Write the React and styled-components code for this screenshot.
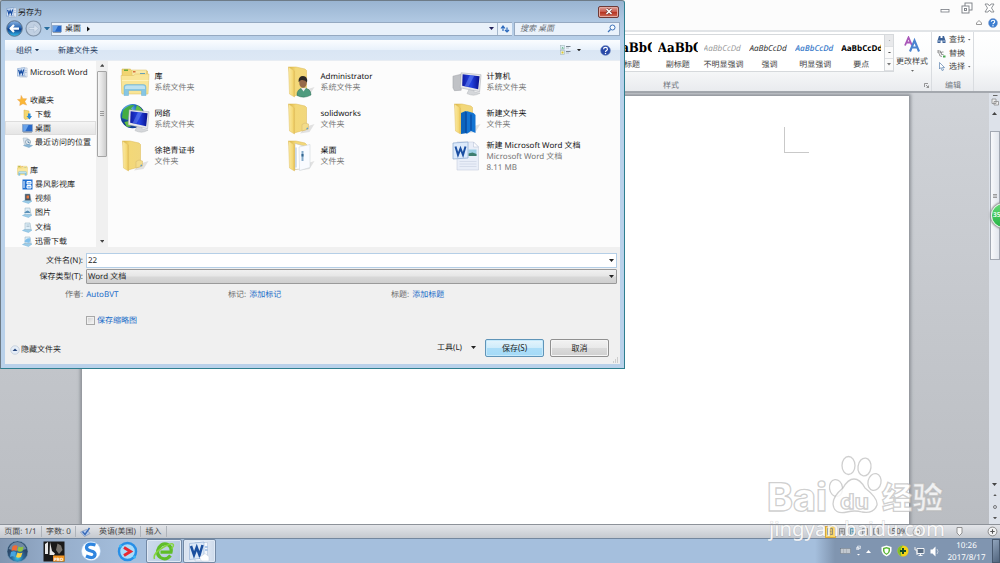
import React, { useState } from 'react';
import styled, { createGlobalStyle, css } from 'styled-components';

const GlobalStyle = createGlobalStyle`
  * {
    box-sizing: border-box;
  }

  body {
    margin: 0;
    overflow: hidden;
    font-family: 'Noto Sans', 'Noto Sans CJK SC', sans-serif;
    font-size: 8px;
    line-height: 11px;
    color: #1e1e1e;
    text-rendering: geometricPrecision;
  }
`;

const Desktop = styled.div`
  position: relative;
  display: flex;
  flex-direction: column;
  width: 1000px;
  height: 563px;
  overflow: hidden;
  white-space: nowrap;
`;

/* ---------- Word window ---------- */

const TitleBar = styled.header`
  display: flex;
  flex-direction: column;
  align-items: flex-end;
  height: 32px;
  background: #fcfcfc;
  border-bottom: 2px solid #e1e4e7;
`;

const WindowButtons = styled.div`
  display: flex;
  align-items: center;
  gap: 11px;
  height: 15px;
  padding-right: 5px;
`;

const HelpButtons = styled.div`
  display: flex;
  align-items: center;
  gap: 6px;
  height: 15px;
  padding-right: 2px;
`;

const Ribbon = styled.div`
  display: flex;
  justify-content: flex-end;
  height: 61px;
  padding-right: 26px;
  background: linear-gradient(#ffffff, #fafbfc 55%, #e9ebee);
  border-bottom: 2px solid #a4a8ae;
`;

const RibbonGroup = styled.div`
  display: flex;
  flex-direction: column;
  width: ${({ $width }) => $width}px;
  border-right: 1px solid #d9dce0;
`;

const GroupBody = styled.div`
  display: flex;
  flex: 1;
  align-items: flex-start;
  padding: ${({ $padding }) => $padding || '2px 0 0'};
`;

const GroupLabel = styled.div`
  position: relative;
  height: 10px;
  line-height: 10px;
  padding-left: ${({ $left }) => $left}px;
  color: #70767e;
`;

const Launcher = styled.svg`
  position: absolute;
  right: 2px;
  top: 2px;
`;

const Gallery = styled.div`
  display: flex;
  width: 286px;
  height: 38px;
  background: #ffffff;
  border: 1px solid #d6d9dc;
`;

const StyleCard = styled.div`
  display: flex;
  flex-direction: column;
  align-items: center;
  width: 46px;
  padding-top: 6px;
  color: #444;
`;

const Sample = styled.div`
  width: 40px;
  height: 15px;
  line-height: 15px;
  margin-bottom: 3px;
  overflow: hidden;
  font-family: 'Open Sans', sans-serif;
  font-size: 8.1px;
  color: ${({ $color }) => $color || '#222'};
  font-style: ${({ $italic }) => ($italic ? 'italic' : 'normal')};
  font-weight: ${({ $bold }) => $bold || 400};

  ${({ $heading }) => $heading && css`
    font-family: 'DejaVu Serif Condensed', 'DejaVu Serif', serif;
    font-stretch: condensed;
    font-size: 13.2px;
    font-weight: 700;
    color: #000;
  `}
`;

const GalleryArrows = styled.div`
  display: flex;
  flex-direction: column;
  width: 9px;
  border-left: 1px solid #d6d9dc;
`;

const GalleryArrow = styled.div`
  display: flex;
  flex: 1;
  align-items: center;
  justify-content: center;
  background: ${({ $muted }) => ($muted ? '#e8e9eb' : '#fbfbfb')};
  border-bottom: 1px solid #dfe1e4;
`;

const ChangeStyles = styled.div`
  display: flex;
  flex-direction: column;
  align-items: center;
  width: 37px;
  padding: 2px 1px 0 0;
  gap: 3px;
  color: #444;
`;

const EditMenu = styled.div`
  display: flex;
  flex-direction: column;
  padding-left: 5px;
`;

const EditItem = styled.div`
  display: flex;
  align-items: center;
  gap: 3px;
  height: 13.6px;
  color: #444;
`;

const Workspace = styled.main`
  display: flex;
  flex: 1;
  padding-left: 82px;
  background: linear-gradient(#d0d3d8, #babdc2);
`;

const Page = styled.div`
  width: 827px;
  margin-top: 3px;
  padding: 31px 0 0 702px;
  background: #ffffff;
  box-shadow: 0 0 3px 2px #8f9399;
`;

const CropMark = styled.div`
  width: 25px;
  height: 26px;
  border-left: 1px solid #c9c9c9;
  border-bottom: 1px solid #c9c9c9;
`;

const DocScroll = styled.div`
  display: flex;
  flex-direction: column;
  align-items: center;
  width: 11px;
  margin-left: auto;
  background: #dde2ea;
`;

const DocScrollTop = styled.div`
  display: flex;
  flex-direction: column;
  align-items: center;
  justify-content: space-between;
  height: 38px;
  padding: 2px 0 16px;
`;

const DocThumb = styled.div`
  display: flex;
  align-items: center;
  justify-content: center;
  width: 10px;
  height: 129px;
  border: 1px solid #a3a9b3;
  background: linear-gradient(90deg, #f8f9fb, #e2e6ed);
`;

const DocScrollBottom = styled.div`
  display: flex;
  flex-direction: column;
  align-items: center;
  justify-content: space-between;
  height: 41px;
  margin-top: auto;
  padding-bottom: 5px;
`;

const SpeedBall = styled.div`
  position: absolute;
  left: 991px;
  top: 203px;
  width: 25px;
  height: 25px;
  padding-left: 1px;
  border-radius: 50%;
  border: 1px solid #e5f2e7;
  background: linear-gradient(#62d875, #27b545);
  box-shadow: 0 0 2px 1px #888;
  color: #fff;
  font-size: 6.5px;
  font-weight: 600;
  line-height: 22px;
`;

const StatusBar = styled.footer`
  display: flex;
  align-items: center;
  height: 14px;
  background: linear-gradient(#e3e5e9, #c5c9cf);
  border-top: 1px solid #8d9299;
  color: #444;
`;

const StatusItem = styled.div`
  display: flex;
  align-items: center;
  justify-content: center;
  width: ${({ $width }) => $width}px;
  height: 11px;
  border-right: ${({ $plain }) => ($plain ? 'none' : '1px solid #aeb3ba')};
`;

const ViewControls = styled.div`
  display: flex;
  align-items: center;
  margin-left: auto;
`;

const ViewButton = styled.div`
  display: flex;
  justify-content: center;
  align-items: center;
  width: 11.5px;
  height: 12px;
  background: ${({ $active }) => ($active ? '#f9d766' : 'transparent')};
  border: 1px solid ${({ $active }) => ($active ? '#d9a93c' : 'transparent')};
`;

const ZoomLevel = styled.span`
  width: 22px;
  margin: 0 3px 0 5px;
`;

const ZoomSlider = styled.div`
  display: flex;
  align-items: center;
  width: 88px;
  padding-right: 2px;
`;

const ZoomThumb = styled.svg`
  margin: 0 auto 0 34px;
`;

/* ---------- Taskbar ---------- */

const Taskbar = styled.div`
  display: flex;
  height: 25px;
  border-top: 1px solid #73879f;
  background: linear-gradient(90deg, #8196b1 0, #93aac7 45px, #a5bfdd 130px, #a5bfdd 815px, #8095b0 835px, #8095b0);
`;

const TaskButton = styled.div`
  display: flex;
  align-items: center;
  justify-content: center;
  width: ${({ $width }) => $width}px;
  height: 24px;

  ${({ $open }) => $open && css`
    margin-right: 1px;
    border: 1px solid #7389a5;
    border-radius: 2px;
    background: ${$open === 'active' ? 'linear-gradient(90deg, #d5e0ef, #eff4fb 50%, #ccd9ea)' : 'linear-gradient(120deg, #cfdcec, #b0c6df)'};
    box-shadow: inset 0 0 0 1px #dfe9f5;
  `}
`;

const Tray = styled.div`
  display: flex;
  align-items: center;
  margin-left: auto;
  gap: 5px;
`;

const Clock = styled.div`
  width: 45px;
  text-align: center;
  color: #fff;
  font-size: 8px;
  line-height: 11.3px;
  padding-top: 1px;
`;

const ShowDesktop = styled.div`
  width: 8px;
  height: 24px;
  margin-left: -2px;
  border: 1px solid #48596f;
  background: linear-gradient(135deg, #8fa3bb, #52657e);
`;

/* ---------- Save dialog ---------- */

const Dialog = styled.section`
  position: absolute;
  left: 0;
  top: 0;
  display: flex;
  flex-direction: column;
  width: 625px;
  height: 369px;
  padding: 0 4px 4px 4px;
  background: linear-gradient(#99b4d1 0, #b0c8e2 20px, #b9d1ea 40px, #b9d1ea);
  border: 1px solid #6d7b87;
  border-right-color: #2e7f8f;
  border-bottom-color: #2e7f8f;
  border-radius: 2px 3px 0 0;
`;

const DialogTitle = styled.div`
  display: flex;
  align-items: center;
  height: 19px;
  padding: 3px 1px 0 1px;
  gap: 1px;
`;

const CloseButton = styled.button`
  display: flex;
  align-items: center;
  justify-content: center;
  width: 21px;
  height: 12px;
  margin-left: auto;
  margin-top: -1px;
  padding: 0;
  border: 1px solid #6d3a37;
  border-radius: 2px;
  background: linear-gradient(#dca29a, #c9584b 48%, #b5321f 52%, #cf6e5b);
  box-shadow: inset 0 0 0 1px #e3aaa2;
`;

const AddressRow = styled.div`
  display: flex;
  align-items: center;
  height: 17px;
`;

const NavButtons = styled.div`
  display: flex;
  align-items: center;
  gap: 2px;
  width: 46px;
  padding-left: 1px;
`;

const AddressBar = styled.div`
  display: flex;
  align-items: center;
  width: 461px;
  height: 14px;
  padding: 0;
  border: 1px solid #95a9c1;
  border-right: none;
  background: #e9f1fa;
`;

const CrumbText = styled.span`
  margin: 0 6px 0 3px;
`;

const AddressEnd = styled.div`
  display: flex;
  align-items: center;
  justify-content: center;
  width: ${({ $width }) => $width}px;
  height: 12px;
  border-left: ${({ $line }) => ($line ? '1px solid #a5b7cc' : 'none')};
  margin-left: ${({ $push }) => ($push ? 'auto' : 0)};
`;

const SearchBox = styled.div`
  display: flex;
  align-items: center;
  justify-content: space-between;
  width: 106px;
  height: 14px;
  margin-left: 2px;
  padding: 0 3px 0 5px;
  border: 1px solid #95a9c1;
  background: #eaf2fb;
  color: #6b7077;
  font-style: italic;
`;

const CommandBar = styled.div`
  display: flex;
  align-items: center;
  height: 21px;
  margin-top: 3px;
  padding: 0 9px 0 11px;
  background: linear-gradient(#fbfdff, #e8f1fb 50%, #dae6f4 52%, #dde8f5);
  border-bottom: 1px solid #e8edf3;
  color: #1e395b;
`;

const Command = styled.div`
  display: flex;
  align-items: center;
  gap: 3px;
  margin-right: 19px;
`;

const CommandIcons = styled.div`
  display: flex;
  align-items: center;
  margin-left: auto;
  gap: ${({ $gap }) => $gap}px;
`;

const Explorer = styled.div`
  display: flex;
  height: 186px;
  background: #fcfcfc;
`;

const Tree = styled.nav`
  width: 91px;
  padding-top: 4px;
  overflow: hidden;
`;

const TreeRow = styled.div`
  display: flex;
  align-items: center;
  gap: 2px;
  height: 14.1px;
  margin-top: ${({ $gap }) => ($gap ? 14.1 : 0)}px;
  padding-left: ${({ $level }) => ($level ? 17 : 12)}px;
  background: ${({ $selected }) => ($selected ? 'linear-gradient(#f6f6f6, #e4e4e4)' : 'none')};
  box-shadow: ${({ $selected }) => ($selected ? 'inset 0 0 0 1px #dddddd' : 'none')};
`;

const TreeScroll = styled.div`
  display: flex;
  flex-direction: column;
  align-items: center;
  width: 12px;
  padding: 3px 0 4px;
  background: #f0f0f0;
`;

const TreeThumb = styled.div`
  display: flex;
  align-items: center;
  justify-content: center;
  width: 10px;
  height: 86px;
  margin: 4px 0 auto;
  border: 1px solid #a5a5a5;
  border-radius: 1px;
  background: linear-gradient(90deg, #f5f5f5, #e3e3e3 50%, #cdcdcd);
`;

const FileGrid = styled.div`
  display: grid;
  grid-template-columns: 166px 166px 166px;
  grid-auto-rows: 37px;
  padding: 2px 0 0 12px;
`;

const FileItem = styled.div`
  display: flex;
  align-items: center;
  gap: 4.5px;
`;

const FileText = styled.div`
  padding-top: ${({ $tall }) => ($tall ? 2 : 0)}px;
`;

const FileMeta = styled.div`
  color: #747474;
`;

const FileName = styled.div`
  color: #111;
`;

const SaveForm = styled.div`
  display: flex;
  flex-direction: column;
  flex: 1;
  padding: 5px 2px 0 0;
  background: #f0f0f0;
`;

const FieldRow = styled.label`
  display: flex;
  align-items: center;
  height: 16.5px;
`;

const FieldLabel = styled.span`
  width: 78px;
  margin-right: 3px;
  text-align: right;
`;

const Field = styled.div`
  display: flex;
  align-items: center;
  justify-content: space-between;
  flex: 1;
  height: 15px;
  margin-right: 1px;
  padding: 0 2px 0 1px;
  border: 1px solid #b5cfe7;
  background: #fff;

  ${({ $select }) => $select && css`
    border-color: #9a9a9a;
    border-radius: 1px;
    background: linear-gradient(#f0f0f0, #e6e6e6 48%, #d8d8d8 52%, #cfcfcf);
  `}
`;

const DetailsRow = styled.div`
  display: flex;
  align-items: center;
  height: 19px;
`;

const Detail = styled.div`
  display: flex;
  gap: 3px;
  width: ${({ $width }) => $width}px;
  padding-left: ${({ $indent }) => $indent || 0}px;
  color: #6d6d6d;
`;

const Link = styled.span`
  color: #1b6cc8;
`;

const CheckRow = styled.div`
  display: flex;
  align-items: center;
  gap: 2px;
  height: 12px;
  margin: 10px 0 0 81px;
`;

const CheckBox = styled.button`
  width: 9px;
  height: 9px;
  padding: 0;
  border: 1px solid #a8a8a8;
  background: ${({ $on }) => ($on ? '#9cc3ea' : 'linear-gradient(135deg, #cdcdcd, #fafafa)')};
  box-shadow: inset 0 0 0 1px #f0f0f0;
`;

const DialogFooter = styled.div`
  display: flex;
  align-items: center;
  height: 19px;
  margin-top: 12px;
  padding: 0 9px 0 5px;
`;

const HideFolders = styled.div`
  display: flex;
  align-items: center;
  gap: 1px;
  margin-top: 4px;
`;

const Tools = styled.div`
  display: flex;
  align-items: center;
  gap: 9px;
  margin-left: auto;
  margin-right: 9px;
`;

const PushButton = styled.button`
  width: 59px;
  height: 18px;
  margin-left: ${({ $primary }) => ($primary ? 0 : 6)}px;
  padding: 0;
  font: inherit;
  color: #1e1e1e;
  border: 1px solid ${({ $primary }) => ($primary ? '#5f94b8' : '#909090')};
  border-radius: 2px;
  background: ${({ $primary }) =>
    $primary
      ? 'linear-gradient(#e4f4fc, #cfecfb 48%, #abddf8 52%, #a4daf7)'
      : 'linear-gradient(#f2f2f2, #e9e9e9 48%, #dadada 52%, #d0d0d0)'};
  box-shadow: inset 0 0 0 1px ${({ $primary }) => ($primary ? '#c5e9fb' : '#f5f5f5')};
`;

const SizeGrip = styled.svg`
  position: absolute;
  right: 5px;
  bottom: 4px;
`;

const Watermark = styled.svg`
  position: absolute;
  left: 760px;
  top: 450px;
`;

/* ---------- Icons ---------- */

const IconBase = styled.svg`
  display: block;
  flex: none;
`;

const Caret = ({ size = 5, up, color = '#222' }) => (
  <IconBase width={size} height={size * 0.6} viewBox="0 0 10 6">
    <path d={up ? 'M0 6L5 0L10 6Z' : 'M0 0H10L5 6Z'} fill={color} />
  </IconBase>
);

const WordIcon = ({ size = 11 }) => (
  <IconBase width={size} height={size} viewBox="0 0 24 24">
    <path d="M9 2h13v20H6V9" fill="#eef3fa" stroke="#9aabc4" />
    <path d="M18 8h3M18 12h3M10 20h10" stroke="#7d98bf" strokeWidth="1.400" />
    <path d="M1 3.500L17 1.500V18L1 20Z" fill="#dce9f8" stroke="#5d86bf" />
    <path d="M3.500 6L6.200 15L9 7.500L12 15L14.500 5.500" fill="none" stroke="#1a4fa3" strokeWidth="2.800" />
  </IconBase>
);

const WordTaskIcon = () => (
  <svg width="21" height="21" viewBox="0 0 42 42">
    <path d="M12 3h25v32l-9 5H12Z" fill="#f4f7fc" stroke="#a9bbd5" />
    <path d="M32 12h5M32 18h5" stroke="#6a9bd8" strokeWidth="2" />
    <path d="M1 5L30 2V34L1 37Z" fill="#dce8f7" stroke="#7fa1cf" />
    <path d="M4 10L10 28L15.500 13L21 28L27 8" fill="none" stroke="#1b4f9f" strokeWidth="5" />
    <path d="M21 33l11-8l8 6v9H25Z" fill="#fff" stroke="#bfcbdc" />
  </svg>
);

const MonitorIcon = ({ width = 10 }) => (
  <IconBase width={width} height={width * 0.8} viewBox="0 0 20 16">
    <rect x="1" y="1" width="18" height="13" fill="#2869c9" stroke="#8fa5c0" />
    <path d="M2 2h10L6 13H2Z" fill="#6aa3e8" />
    <path d="M2 15h16" stroke="#7c8794" strokeWidth="1.500" />
  </IconBase>
);

const BackIcon = () => (
  <IconBase width="17" height="17" viewBox="0 0 34 34">
    <defs>
      <linearGradient id="back" x2="0" y2="1">
        <stop stopColor="#8eb5e2" /><stop offset=".45" stopColor="#2866b3" />
        <stop offset=".55" stopColor="#0c3d8a" /><stop offset="1" stopColor="#35c2f2" />
      </linearGradient>
    </defs>
    <circle cx="17" cy="17" r="15.500" fill="url(#back)" stroke="#5b7189" strokeWidth="2" />
    <path d="M26 17H10M16 10L9 17L16 24" fill="none" stroke="#fff" strokeWidth="4.500" strokeLinejoin="round" />
  </IconBase>
);

const ForwardIcon = () => (
  <IconBase width="17" height="17" viewBox="0 0 34 34">
    <circle cx="17" cy="17" r="15" fill="#c1d0e2" stroke="#7f91a6" strokeWidth="2.200" />
    <path d="M8 15h10V9l9 8l-9 8v-6H8Z" fill="#d7e2ef" stroke="#9fb2c9" />
  </IconBase>
);

const RefreshIcon = () => (
  <svg width="10" height="8" viewBox="0 0 20 16">
    <path d="M6 12V3M2 7L6 2L10 7" fill="none" stroke="#2d6bbd" strokeWidth="2.400" />
    <path d="M14 5v9M10 10l4 4l4-4" fill="none" stroke="#2d6bbd" strokeWidth="2.400" />
  </svg>
);

const SearchIcon = () => (
  <svg width="9" height="9" viewBox="0 0 18 18">
    <circle cx="11" cy="7" r="5" fill="#f5faff" stroke="#3c72b8" strokeWidth="2" />
    <path d="M7 11L2 16" stroke="#3c72b8" strokeWidth="2.600" />
  </svg>
);

const HelpIcon = ({ size = 10, color = '#2949a8' }) => (
  <svg width={size} height={size} viewBox="0 0 20 20">
    <circle cx="10" cy="10" r="9" fill={color} stroke="#8aa0cc" />
    <path d="M6.500 7.500C6.500 3.500 13.500 3.500 13.500 7.500C13.500 10 10 10 10 12.500" fill="none" stroke="#fff" strokeWidth="2.200" />
    <circle cx="10" cy="15.500" r="1.400" fill="#fff" />
  </svg>
);

const ViewIcon = () => (
  <svg width="11" height="10" viewBox="0 0 22 20">
    <rect x="1" y="1" width="8" height="8" fill="#d9ecf2" stroke="#9cb0b5" />
    <rect x="1" y="11" width="8" height="8" fill="#e2edd8" stroke="#9cb0b5" />
    <path d="M3 7l2-3l3 3Z" fill="#4fa968" />
    <circle cx="5" cy="15" r="2" fill="#e3c52c" />
    <path d="M12 3h9M12 13h9" stroke="#77828e" strokeWidth="2" />
    <path d="M12 6h6M12 16h6" stroke="#acb5be" strokeWidth="1.500" />
  </svg>
);

const LibraryIcon = ({ size = 30 }) => (
  <IconBase width={size} height={size} viewBox="0 0 60 60">
    <path d="M4 4h17l3 4h31v44H4Z" fill="#f1d470" stroke="#d3b04e" />
    <path d="M24 6h29v12H24Z" fill="#f8e9a7" stroke="#dcc06b" />
    <path d="M8 5h8v3H8Z" fill="#69a83b" />
    <path d="M26 8h5v3H26Z" fill="#d8703c" />
    <path d="M40 12h10v3H40Z" fill="#4197d0" />
    <path d="M2 17H27L31 14H58L56 54H4Z" fill="#f9e597" stroke="#dfbf60" />
    <path d="M4 27H57" stroke="#fff2b9" strokeWidth="2" />
    <path d="M8 57V40Q8 35 13 35H47Q52 35 52 40V57H43V47H17V57Z" fill="#86c6e4" stroke="#6fb0d0" />
    <path d="M10 44V40Q10 37 14 37H46Q50 37 50 40V44Z" fill="#bde1f0" />
  </IconBase>
);

const FolderIcon = ({ content }) => (
  <IconBase width="30" height="34" viewBox="0 0 60 68">
    <defs>
      <linearGradient id="folderBack"><stop stopColor="#d9b23f" /><stop offset=".4" stopColor="#f3d878" /><stop offset="1" stopColor="#f1d77d" /></linearGradient>
      <linearGradient id="folderFlap"><stop stopColor="#fbeaa4" /><stop offset=".7" stopColor="#f4d876" /><stop offset="1" stopColor="#e3bc50" /></linearGradient>
    </defs>
    <path d="M38 50L57 44L47 60L28 63Z" fill="#777" opacity=".2" />
    <path d="M5 4H20L38 8L41 11V55L16 62Z" fill="url(#folderBack)" stroke="#dcb852" />
    {content === 'blue' && (
      <>
        <path d="M18 22L27 18L31 20V62L18 64Z" fill="#0c64bd" />
        <path d="M29 18L43 22L47 26V62L38 58L29 64Z" fill="#1273d2" />
        <path d="M28 20V62M38 25V57" stroke="#063f93" strokeWidth="2" />
      </>
    )}
    {content === 'docs' && (
      <>
        <path d="M18 9L39 15V59L18 61Z" fill="#fff" stroke="#bbb" />
        <path d="M26 16L48 11V57L27 63Z" fill="#f9fbff" stroke="#c9d0d7" />
        <path d="M20 17V57" stroke="#a9c2dc" strokeWidth="2" />
        <path d="M33 24v20" stroke="#84aacb" strokeWidth="4" />
        <path d="M33 30v5" stroke="#33658f" strokeWidth="4" />
      </>
    )}
    {!content && <path d="M38 42l7 2v10l-13 4V45Z" fill="#f3dc8a" stroke="#d2b76c" />}
    {!content && <path d="M41 52l3-1v3l-3 1Z" fill="#5b9bd0" />}
    <path d="M5 4L17 12V64L7 58Z" fill="url(#folderFlap)" stroke="#e1c166" />
    {content === 'user' && (
      <>
        <path d="M22 61Q21 48 34 46Q50 46 50 60Q36 68 22 61Z" fill="#4f9b7e" stroke="#2b6d55" />
        <path d="M30 46l5 7l5-7Z" fill="#eee" />
        <ellipse cx="34" cy="35" rx="7.500" ry="10.500" fill="#96694a" />
        <path d="M25 33Q25 22 34 22Q44 22 42 35Q39 29 31 30Q28 30 26 34Z" fill="#2b2826" />
      </>
    )}
  </IconBase>
);

const ComputerIcon = ({ globe }) => (
  <IconBase width="30" height="31" viewBox="0 0 62 62">
    <defs>
      <linearGradient id="screen"><stop stopColor="#101ca4" /><stop offset=".5" stopColor="#2445e5" /><stop offset="1" stopColor="#08108c" /></linearGradient>
      <radialGradient id="earth" cx=".35" cy=".25"><stop stopColor="#9ed5fc" /><stop offset=".6" stopColor="#2374c4" /><stop offset="1" stopColor="#123f91" /></radialGradient>
    </defs>
    {globe ? (
      <>
        <circle cx="26" cy="26" r="25" fill="url(#earth)" />
        <path d="M6 15Q16 2 30 3L23 10L28 18L19 24L16 34L4 30Z" fill="#44ad42" />
        <path d="M35 3q9 5 13 14l-8 4l-8-8ZM9 38l10-2l3 12l-8 0Z" fill="#63bf43" />
      </>
    ) : (
      <path d="M2 20L19 16V49L5 50L2 44Z" fill="#c0c2c6" stroke="#9a9da2" />
    )}
    <path d="M36 46l8-2l2 9l12 2q-12 8-27 1Z" fill="#d5d7da" stroke="#b2b5b9" />
    <path d="M19 13L60 17L57 52L17 44Z" fill="#e7e8ea" stroke="#a0a5ad" />
    <path d="M22 16L57 20L54 47L21 40Z" fill="url(#screen)" />
    <path d="M37 18L46 19L34 42L26 41Z" fill="#6d8bf4" opacity=".5" />
  </IconBase>
);

const WordFileIcon = () => (
  <IconBase width="30" height="32" viewBox="0 0 60 64">
    <path d="M10 4H43L53 14V60H10Z" fill="#e9eef8" stroke="#bcc6d8" />
    <path d="M43 4V14H53Z" fill="#fbfcfe" stroke="#b2bdd2" />
    <path d="M33 19H49V32H33Z" fill="#9fd0e6" />
    <path d="M33 27l8-2l8 3v4H33Z" fill="#3d7d6f" />
    <path d="M15 43H49M15 48H49M15 53H49" stroke="#cdd6e6" strokeWidth="1.500" />
    <path d="M2 6L32 4V36L2 38Z" fill="#dceafb" stroke="#8fabd0" strokeWidth="1.500" />
    <path d="M7 13L12 30L17 17L22 30L27 13" fill="none" stroke="#1a4ea2" strokeWidth="4" />
  </IconBase>
);

const StarIcon = () => (
  <IconBase width="11" height="11" viewBox="0 0 24 24">
    <path d="M9 1L13 8L21 8L17 14L21 22L13 19L6 23L7 15L1 10L8 9Z" fill="#fbb735" stroke="#e9a04a" />
  </IconBase>
);

const SmallIcon = ({ kind }) => (
  <IconBase width="11" height="11" viewBox="0 0 22 22">
    {kind === 'download' && (
      <>
        <path d="M4 2l10 2v15l-8 2l-2-3Z" fill="#f4d871" stroke="#d8b14b" />
        <path d="M12 9h5v5h3l-5 7l-6-7h3Z" fill="#2b8ad6" />
      </>
    )}
    {kind === 'recent' && (
      <>
        <path d="M2 2h9l4 5v9H5Z" fill="#d9e4ee" stroke="#a5b4c1" />
        <circle cx="12" cy="10" r="5" fill="#e9f1f7" stroke="#7f97a9" strokeWidth="1.500" />
        <path d="M12 7v4h3" fill="none" stroke="#40729a" strokeWidth="1.500" />
        <path d="M3 17l9-2l9 2l-7 4Z" fill="#8cb9d8" stroke="#6c9fc3" />
      </>
    )}
    {kind === 'storm' && (
      <>
        <rect x="1" y="1" width="20" height="20" fill="#1f6fd1" />
        <path d="M4 4v14M10 5h8v5h-8ZM10 13h8v5h-8Z" stroke="#fff" strokeWidth="2" fill="#7fb7f5" />
      </>
    )}
    {['video', 'picture', 'document', 'thunder'].includes(kind) && (
      <>
        <path d="M1 17l8-4l11 3l-7 5Z" fill="#9bcce8" stroke="#76b3d8" />
        <path d="M6 2h10l2 13H6Z" fill={kind === 'video' ? '#465565' : '#dfeef8'} stroke="#8facbf" />
      </>
    )}
    {kind === 'video' && <path d="M9 5h5v6H9Z" fill="#e67a40" />}
    {kind === 'picture' && <path d="M4 12q8-10 13 0Z" fill="#5b91b8" />}
    {kind === 'document' && <path d="M9 6h6M9 9h6" stroke="#87a0b1" />}
    {kind === 'thunder' && <path d="M5 12q3-9 12-7l-2 9Z" fill="#81c0eb" />}
  </IconBase>
);

const BinocularsIcon = () => (
  <svg width="9" height="9" viewBox="0 0 18 18">
    <path d="M4 2h3v4h4V2h3l3 9v5h-6v-5H7v5H1v-5Z" fill="#3d6297" />
    <path d="M4 10v4M14 10v4" stroke="#b5cae7" strokeWidth="2" />
  </svg>
);

const ReplaceIcon = () => (
  <svg width="9" height="9" viewBox="0 0 18 18">
    <path d="M2 2v6h5V4H2M5 10q-1 5 5 5" fill="none" stroke="#777" strokeWidth="1.500" />
    <path d="M13 6H9v5h4" fill="none" stroke="#777" strokeWidth="1.500" />
    <path d="M12 13h5v4h-5Z" fill="#49a852" />
  </svg>
);

const PointerIcon = () => (
  <svg width="9" height="9" viewBox="0 0 18 18">
    <path d="M5 1v13l3-3l2 6l3-1l-2-5h4Z" fill="#fff" stroke="#4f78a9" strokeWidth="1.300" />
  </svg>
);

const ChangeStylesIcon = () => (
  <svg width="17" height="17" viewBox="0 0 34 34">
    <path d="M2 19L9 3L16 19M5 13H13" fill="none" stroke="#a957b8" strokeWidth="3.600" />
    <path d="M12 31L21 9L30 31M16 23H27" fill="none" stroke="#4b83d0" strokeWidth="4.200" />
  </svg>
);

const StartIcon = () => (
  <svg width="23" height="23" viewBox="0 0 46 46">
    <defs>
      <radialGradient id="orb" cx=".5" cy=".8"><stop stopColor="#38c5e9" /><stop offset=".55" stopColor="#2b6798" /><stop offset="1" stopColor="#2b4768" /></radialGradient>
    </defs>
    <circle cx="23" cy="23" r="21" fill="url(#orb)" stroke="#78a2bd" />
    <path d="M5 18Q11 4 23 4Q35 4 41 18Q23 24 5 18Z" fill="#c1d7e8" opacity=".45" />
    <path d="M13 13q5-4 10-1l-2 10q-5-3-10 0Z" fill="#ef6b35" />
    <path d="M25 13q5 3 10 0l-2 9q-5 3-10 0Z" fill="#8fc53f" />
    <path d="M10 24q5-3 10 0l-2 10q-5-3-10 0Z" fill="#45a4de" />
    <path d="M23 25q5 3 10 0l-3 9q-5 3-10 0Z" fill="#fbd245" />
  </svg>
);

const CapturePro = () => (
  <svg width="22" height="21" viewBox="0 0 44 42">
    <rect x="1" y="1" width="42" height="40" fill="#1a1a1a" />
    <path d="M4 6l6-4v24H4ZM14 2l4 18l6 5l-2 3H13Z" fill="#e9e9e9" />
    <path d="M29 5l7 4l3 9l-7 8l-6-8Z" fill="#77736d" />
    <rect x="20" y="29" width="23" height="12" fill="#f29422" />
    <text x="22" y="39" fontSize="9" fontWeight="700" fill="#fff">PRO</text>
  </svg>
);

const SogouIcon = () => (
  <svg width="20" height="20" viewBox="0 0 40 40">
    <circle cx="20" cy="20" r="19" fill="#fff" stroke="#a9cdf2" />
    <path d="M29 8Q12 3 11 13Q11 18 20 20Q29 22 28 28Q25 37 10 30" fill="none" stroke="#2f85df" strokeWidth="6.500" />
  </svg>
);

const PlayIcon = () => (
  <svg width="21" height="21" viewBox="0 0 42 42">
    <circle cx="21" cy="21" r="17" fill="#a9dcfa" stroke="#278fe7" strokeWidth="5" />
    <circle cx="7" cy="10" r="3" fill="#35b8f5" /><circle cx="35" cy="32" r="3" fill="#35b8f5" />
    <path d="M14 13L27 21L14 29" fill="none" stroke="#e92932" strokeWidth="6" />
  </svg>
);

const BrowserIcon = () => (
  <svg width="22" height="22" viewBox="0 0 44 44">
    <path d="M35 31Q26 42 15 35Q5 28 12 15Q20 4 31 10Q38 15 36 24H15" fill="none" stroke="#5fbd29" strokeWidth="6.500" />
    <path d="M3 38Q-1 27 20 15Q40 3 41 10Q41 14 37 17" fill="none" stroke="#86d640" strokeWidth="3" />
  </svg>
);

/* ---------- Data ---------- */

const STYLES = [
  { sample: 'AaBbC', name: '标题', heading: true },
  { sample: 'AaBbC', name: '副标题', heading: true },
  { sample: 'AaBbCcDd', name: '不明显强调', color: '#969696', italic: true },
  { sample: 'AaBbCcDd', name: '强调', italic: true },
  { sample: 'AaBbCcDd', name: '明显强调', color: '#3d7dcb', italic: true, bold: 600 },
  { sample: 'AaBbCcDd', name: '要点', color: '#000', bold: 700 },
];

const TREE = [
  { label: 'Microsoft Word', icon: <WordIcon /> },
  { label: '收藏夹', icon: <StarIcon />, gap: true },
  { label: '下载', icon: <SmallIcon kind="download" />, level: 1 },
  { label: '桌面', icon: <MonitorIcon width={11} />, level: 1, selected: true },
  { label: '最近访问的位置', icon: <SmallIcon kind="recent" />, level: 1 },
  { label: '库', icon: <LibraryIcon size={11} />, gap: true },
  { label: '暴风影视库', icon: <SmallIcon kind="storm" />, level: 1 },
  { label: '视频', icon: <SmallIcon kind="video" />, level: 1 },
  { label: '图片', icon: <SmallIcon kind="picture" />, level: 1 },
  { label: '文档', icon: <SmallIcon kind="document" />, level: 1 },
  { label: '迅雷下载', icon: <SmallIcon kind="thunder" />, level: 1 },
];

const FILES = [
  { name: '库', meta: ['系统文件夹'], icon: <LibraryIcon /> },
  { name: 'Administrator', meta: ['系统文件夹'], icon: <FolderIcon content="user" /> },
  { name: '计算机', meta: ['系统文件夹'], icon: <ComputerIcon /> },
  { name: '网络', meta: ['系统文件夹'], icon: <ComputerIcon globe /> },
  { name: 'solidworks', meta: ['文件夹'], icon: <FolderIcon /> },
  { name: '新建文件夹', meta: ['文件夹'], icon: <FolderIcon content="blue" /> },
  { name: '徐艳青证书', meta: ['文件夹'], icon: <FolderIcon /> },
  { name: '桌面', meta: ['文件夹'], icon: <FolderIcon content="docs" /> },
  { name: '新建 Microsoft Word 文档', meta: ['Microsoft Word 文档', '8.11 MB'], icon: <WordFileIcon /> },
];

/* ---------- Sections ---------- */

const WordWindow = () => (
  <>
    <TitleBar>
      <WindowButtons>
        <svg width="10" height="10" viewBox="0 0 10 10"><rect x="1" y="6.500" width="8" height="2.500" fill="#fff" stroke="#777b82" strokeWidth=".8" /></svg>
        <svg width="12" height="12" viewBox="0 0 12 12" fill="#fff" stroke="#777b82" strokeWidth=".9"><rect x="4" y="1" width="7" height="7" /><rect x="1" y="4" width="7" height="7" /><rect x="3.500" y="6.500" width="2" height="2" /></svg>
        <svg width="11" height="10" viewBox="0 0 11 10"><path d="M1 1h3l1.500 2L7 1h3L7.500 5L10 9H7L5.500 7L4 9H1L3.500 5Z" fill="#fff" stroke="#777b82" strokeWidth=".8" /></svg>
      </WindowButtons>
      <HelpButtons>
        <svg width="6" height="5" viewBox="0 0 12 10"><path d="M1 6L6 1L11 6V9H1Z" fill="none" stroke="#777" strokeWidth="1.500" /></svg>
        <HelpIcon size={10} color="#3b7dd0" />
      </HelpButtons>
    </TitleBar>

    <Ribbon>
      <RibbonGroup $width={324}>
        <GroupBody>
          <Gallery>
            {STYLES.map((item) => (
              <StyleCard key={item.name}>
                <Sample $heading={item.heading} $color={item.color} $italic={item.italic} $bold={item.bold}>{item.sample}</Sample>
                {item.name}
              </StyleCard>
            ))}
            <GalleryArrows>
              <GalleryArrow $muted><Caret up size={3} color="#999" /></GalleryArrow>
              <GalleryArrow><Caret size={3} color="#555" /></GalleryArrow>
              <GalleryArrow><Caret size={4} color="#777" /></GalleryArrow>
            </GalleryArrows>
          </Gallery>
          <ChangeStyles>
            <ChangeStylesIcon />
            <span>更改样式</span>
            <Caret size={3} color="#666" />
          </ChangeStyles>
        </GroupBody>
        <GroupLabel $left={55}>
          样式
          <Launcher width="5" height="5" viewBox="0 0 10 10"><path d="M1 8V1H8M4 4L9 9M9 5V9H5" fill="none" stroke="#777" strokeWidth="1.500" /></Launcher>
        </GroupLabel>
      </RibbonGroup>
      <RibbonGroup $width={42}>
        <GroupBody $padding="1px 0 0">
          <EditMenu>
            <EditItem><BinocularsIcon />查找<Caret size={2.5} color="#666" /></EditItem>
            <EditItem><ReplaceIcon />替换</EditItem>
            <EditItem><PointerIcon />选择<Caret size={2.5} color="#666" /></EditItem>
          </EditMenu>
        </GroupBody>
        <GroupLabel $left={13}>编辑</GroupLabel>
      </RibbonGroup>
    </Ribbon>

    <Workspace>
      <Page><CropMark /></Page>
      <DocScroll>
        <DocScrollTop>
          <svg width="8" height="11" viewBox="0 0 16 22"><path d="M4 1H13" stroke="#666" strokeWidth="2" /><path d="M2 8H10V17H2ZM6 13H15V20H6Z" fill="#eee" stroke="#888" strokeWidth="1.500" /></svg>
          <Caret up size={5} color="#444" />
        </DocScrollTop>
        <DocThumb><svg width="4" height="4" viewBox="0 0 4 4"><path d="M0 .5h4M0 2h4M0 3.500h4" stroke="#888" strokeWidth=".8" /></svg></DocThumb>
        <DocScrollBottom>
          <Caret size={5} color="#444" />
          <Caret up size={4} color="#555" />
          <svg width="4" height="4" viewBox="0 0 8 8"><circle cx="4" cy="4" r="3" fill="none" stroke="#555" strokeWidth="1.500" /></svg>
          <Caret size={4} color="#555" />
        </DocScrollBottom>
      </DocScroll>
    </Workspace>

    <StatusBar>
      <StatusItem $width={42}>页面: 1/1</StatusItem>
      <StatusItem $width={34}>字数: 0</StatusItem>
      <StatusItem $width={19} $plain>
        <svg width="11" height="10" viewBox="0 0 22 20"><path d="M1 10L13 5L20 13L9 19Z" fill="#b9cdee" stroke="#6480aa" /><path d="M5 9l5 6L19 2" fill="none" stroke="#396bb8" strokeWidth="2.800" /></svg>
      </StatusItem>
      <StatusItem $width={46}>英语(美国)</StatusItem>
      <StatusItem $width={26}>插入</StatusItem>
      <ViewControls>
        {[0, 1, 2, 3, 4].map((i) => (
          <ViewButton key={i} $active={i === 0}>
            <svg width="6" height="7" viewBox="0 0 12 14"><path d="M1 1H11V13H1ZM3 4H9M3 7H9M3 10H9" fill="none" stroke={i === 2 ? '#3f87a0' : '#777'} strokeWidth="1.500" /></svg>
          </ViewButton>
        ))}
        <ZoomLevel>150%</ZoomLevel>
        <ZoomSlider>
          <svg width="10" height="10" viewBox="0 0 20 20"><circle cx="10" cy="10" r="8" fill="#eee" stroke="#777" /><path d="M6 10H14" stroke="#555" strokeWidth="2" /></svg>
          <ZoomThumb width="7" height="9" viewBox="0 0 14 18"><path d="M2 1H12V12L7 17L2 12Z" fill="#f7f7f7" stroke="#777" strokeWidth="1.500" /></ZoomThumb>
          <svg width="11" height="11" viewBox="0 0 20 20"><circle cx="10" cy="10" r="8" fill="#f3f4f5" stroke="#777" strokeWidth="1.500" /><path d="M6 10H14M10 6V14" stroke="#555" strokeWidth="2" /></svg>
        </ZoomSlider>
      </ViewControls>
    </StatusBar>
  </>
);

const TaskbarSection = () => (
  <Taskbar>
    <TaskButton $width={35}><StartIcon /></TaskButton>
    <TaskButton $width={38}><CapturePro /></TaskButton>
    <TaskButton $width={36}><SogouIcon /></TaskButton>
    <TaskButton $width={37}><PlayIcon /></TaskButton>
    <TaskButton $width={36} $open="idle"><BrowserIcon /></TaskButton>
    <TaskButton $width={33} $open="active"><WordTaskIcon /></TaskButton>
    <Tray>
      <svg width="11" height="8" viewBox="0 0 22 16"><rect x="1" y="3" width="20" height="10" fill="#d7dce2" stroke="#6a747f" /><path d="M3 6H19M3 10H19" stroke="#6a747f" strokeWidth="1.500" strokeDasharray="2 1" /></svg>
      <svg width="5" height="12" viewBox="0 0 10 24"><path d="M3 2H9V7H3ZM1 5H6V9H1Z" fill="#9eb0c6" stroke="#fff" /><path d="M2 18H8L5 21Z" fill="#fff" /></svg>
      <Caret up size={5} color="#fff" />
      <span />
      <svg width="11" height="12" viewBox="0 0 22 24"><path d="M11 1L21 4V12Q19 20 11 23Q3 20 1 12V4Z" fill="#fff" /><path d="M11 4L18 6V12Q17 17 11 20Q5 17 4 12V6Z" fill="#5cb536" /><path d="M11 7l4 1v4q-1 4-4 5q-3-1-4-5V8Z" fill="#fff" /></svg>
      <svg width="12" height="12" viewBox="0 0 24 24"><circle cx="12" cy="12" r="11" fill="#f3d416" /><path d="M1 12A11 11 0 0 1 12 1Q5 8 9 23Q2 19 1 12Z" fill="#7fbf2d" /><path d="M6 12H18M12 6V18" stroke="#174d25" strokeWidth="4" /></svg>
      <svg width="11" height="11" viewBox="0 0 22 22"><path d="M6 5H20V15H6ZM9 19H17M13 15V19" fill="#5b6e85" stroke="#fff" strokeWidth="1.800" /><path d="M2 2V8H6V18" fill="none" stroke="#eee" strokeWidth="2" /></svg>
      <svg width="9" height="11" viewBox="0 0 18 22"><path d="M1 7H5L11 1V21L5 15H1Z" fill="#fff" /><path d="M14 6Q18 11 14 16" fill="none" stroke="#dfe6ed" strokeWidth="1.500" /></svg>
      <Clock>10:26<br />2017/8/17</Clock>
      <ShowDesktop />
    </Tray>
  </Taskbar>
);

const SaveDialog = () => {
  const [thumbnail, setThumbnail] = useState(false);

  return (
    <Dialog>
      <DialogTitle>
        <WordIcon size={11} />
        <span>另存为</span>
        <CloseButton>
          <svg width="8" height="7" viewBox="0 0 16 14"><path d="M3 2L13 12M13 2L3 12" stroke="#6d3a37" strokeWidth="5" /><path d="M3 2L13 12M13 2L3 12" stroke="#fff" strokeWidth="3" /></svg>
        </CloseButton>
      </DialogTitle>
      <AddressRow>
        <NavButtons><BackIcon /><ForwardIcon /><Caret size={6} color="#276d9e" /></NavButtons>
        <AddressBar>
          <MonitorIcon />
          <CrumbText>桌面</CrumbText>
          <svg width="3" height="6" viewBox="0 0 6 10"><path d="M0 0L6 5L0 10Z" fill="#111" /></svg>
          <AddressEnd $width={12} $push><Caret color="#20205a" /></AddressEnd>
          <AddressEnd $width={15} $line><RefreshIcon /></AddressEnd>
        </AddressBar>
        <SearchBox>搜索 桌面<SearchIcon /></SearchBox>
      </AddressRow>
      <CommandBar>
        <Command>组织<Caret size={4} color="#1e395b" /></Command>
        <Command>新建文件夹</Command>
        <CommandIcons $gap={19}>
          <CommandIcons $gap={6}>
            <ViewIcon />
            <Caret size={4} />
          </CommandIcons>
          <HelpIcon size={11} />
        </CommandIcons>
      </CommandBar>
      <Explorer>
        <Tree>
          {TREE.map((row) => (
            <TreeRow key={row.label} $gap={row.gap} $level={row.level} $selected={row.selected}>
              {row.icon}
              {row.label}
            </TreeRow>
          ))}
        </Tree>
        <TreeScroll>
          <Caret up size={4.5} color="#444" />
          <TreeThumb><svg width="4" height="5" viewBox="0 0 4 5"><path d="M0 .5H4M0 2.500H4M0 4.500H4" stroke="#888" strokeWidth=".8" /></svg></TreeThumb>
          <Caret size={4.5} color="#444" />
        </TreeScroll>
        <FileGrid>
          {FILES.map((file) => (
            <FileItem key={file.name}>
              {file.icon}
              <FileText $tall={file.meta.length > 1}>
                <FileName>{file.name}</FileName>
                {file.meta.map((line) => <FileMeta key={line}>{line}</FileMeta>)}
              </FileText>
            </FileItem>
          ))}
        </FileGrid>
      </Explorer>
      <SaveForm>
        <FieldRow><FieldLabel>文件名(N):</FieldLabel><Field>22<Caret /></Field></FieldRow>
        <FieldRow><FieldLabel>保存类型(T):</FieldLabel><Field $select>Word 文档<Caret /></Field></FieldRow>
        <DetailsRow>
          <Detail $width={223} $indent={60}>作者:<Link>AutoBVT</Link></Detail>
          <Detail $width={163}>标记:<Link>添加标记</Link></Detail>
          <Detail $width={120}>标题:<Link>添加标题</Link></Detail>
        </DetailsRow>
        <CheckRow>
          <CheckBox $on={thumbnail} onClick={() => setThumbnail(!thumbnail)} />
          <Link>保存缩略图</Link>
        </CheckRow>
        <DialogFooter>
          <HideFolders>
            <svg width="10" height="10" viewBox="0 0 20 20"><circle cx="10" cy="10" r="8.500" fill="#e5edf7" stroke="#a9b6c8" /><path d="M5 12L10 7L15 12Z" fill="#28487e" /></svg>
            隐藏文件夹
          </HideFolders>
          <Tools>工具(L)<Caret /></Tools>
          <PushButton $primary>保存(S)</PushButton>
          <PushButton>取消</PushButton>
        </DialogFooter>
        <SizeGrip width="7" height="7" viewBox="0 0 7 7"><path d="M5 1h1M3 3h1M5 3h1M1 5h1M3 5h1M5 5h1" stroke="#aaa" /></SizeGrip>
      </SaveForm>
    </Dialog>
  );
};

const BaiduMark = () => (
  <Watermark width="195" height="94" viewBox="0 0 195 94">
    <g fill="#fff" fillOpacity=".8" stroke="#b5b5b5" strokeOpacity=".65" strokeWidth="1.300">
      <ellipse cx="76" cy="38" rx="6.500" ry="8.500" transform="rotate(-8 76 38)" />
      <ellipse cx="88.500" cy="15.500" rx="6.500" ry="9" />
      <ellipse cx="104.500" cy="17" rx="6.500" ry="9" transform="rotate(8 104.500 17)" />
      <ellipse cx="114.500" cy="32" rx="6.500" ry="8.500" transform="rotate(12 114.500 32)" />
      <path d="M94 29Q100 29 105 38Q118 48 117 55Q114 64 102 62Q95 60 87 62Q74 65 73 54Q73 46 83 38Q88 29 94 29Z" />
      <text x="7" y="61" fontFamily="Inter, sans-serif" fontWeight="800" fontSize="39" textLength="60" lengthAdjust="spacingAndGlyphs">Bai</text>
      <text x="80" y="59" fontFamily="Inter, sans-serif" fontWeight="700" fontSize="21" textLength="29" lengthAdjust="spacingAndGlyphs">du</text>
      <text x="122" y="59" fontFamily="'Noto Sans CJK SC', sans-serif" fontWeight="900" fontSize="31" textLength="61" lengthAdjust="spacingAndGlyphs">经验</text>
    </g>
    <text x="9" y="86" fontFamily="'Noto Sans', sans-serif" fontSize="20" textLength="176" lengthAdjust="spacingAndGlyphs" fill="#fff" fillOpacity=".9" stroke="#999" strokeOpacity=".4" strokeWidth="1" paintOrder="stroke">jingyan.baidu.com</text>
  </Watermark>
);

const App = () => (
  <>
    <GlobalStyle />
    <Desktop>
      <WordWindow />
      <TaskbarSection />
      <SpeedBall>35</SpeedBall>
      <SaveDialog />
      <BaiduMark />
    </Desktop>
  </>
);

export default App;
